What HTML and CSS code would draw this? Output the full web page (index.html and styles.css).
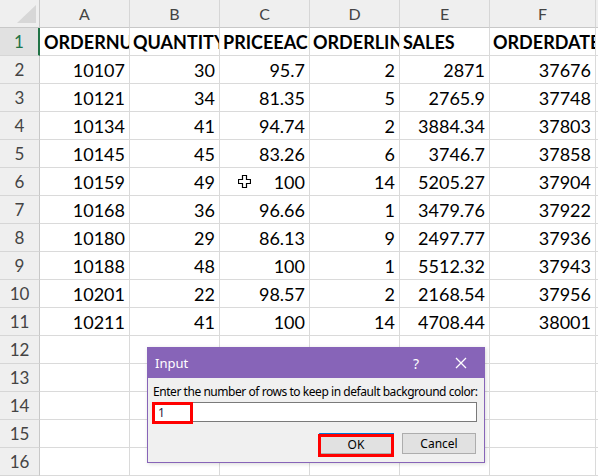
FILE: index.html
```html
<!DOCTYPE html>
<html lang="en">
<head>
    <meta charset="UTF-8">
    <title>Orders - Sheet1</title>
    <link rel="stylesheet" href="styles.css">
</head>
<body>
    <div class="workbook">
        <div class="sheet">
            <div class="corner"><span class="corner-mark"></span></div>
            <div class="col-head">A</div>
            <div class="col-head">B</div>
            <div class="col-head">C</div>
            <div class="col-head">D</div>
            <div class="col-head">E</div>
            <div class="col-head">F</div>
            <div class="col-head"></div>

            <div class="row-head active">1</div>
            <div class="cell text selected">ORDERNUMBER</div>
            <div class="cell text">QUANTITYORDERED</div>
            <div class="cell text">PRICEEACH</div>
            <div class="cell text">ORDERLINENUMBER</div>
            <div class="cell text">SALES</div>
            <div class="cell text">ORDERDATE</div>
            <div class="cell"></div>

            <div class="row-head">2</div>
            <div class="cell">10107</div><div class="cell">30</div><div class="cell">95.7</div><div class="cell">2</div><div class="cell">2871</div><div class="cell">37676</div><div class="cell"></div>
            <div class="row-head">3</div>
            <div class="cell">10121</div><div class="cell">34</div><div class="cell">81.35</div><div class="cell">5</div><div class="cell">2765.9</div><div class="cell">37748</div><div class="cell"></div>
            <div class="row-head">4</div>
            <div class="cell">10134</div><div class="cell">41</div><div class="cell">94.74</div><div class="cell">2</div><div class="cell">3884.34</div><div class="cell">37803</div><div class="cell"></div>
            <div class="row-head">5</div>
            <div class="cell">10145</div><div class="cell">45</div><div class="cell">83.26</div><div class="cell">6</div><div class="cell">3746.7</div><div class="cell">37858</div><div class="cell"></div>
            <div class="row-head">6</div>
            <div class="cell">10159</div><div class="cell">49</div>
            <div class="cell">
                <!-- mouse pointer resting over C6 -->
                <svg class="pointer" width="13" height="13" viewBox="0 0 13 13">
                    <path d="M4.5 0.5h4v4h4v4h-4v4h-4v-4h-4v-4h4z" fill="#fff" stroke="#000" stroke-width="1.2"/>
                </svg>100
            </div>
            <div class="cell">14</div><div class="cell">5205.27</div><div class="cell">37904</div><div class="cell"></div>
            <div class="row-head">7</div>
            <div class="cell">10168</div><div class="cell">36</div><div class="cell">96.66</div><div class="cell">1</div><div class="cell">3479.76</div><div class="cell">37922</div><div class="cell"></div>
            <div class="row-head">8</div>
            <div class="cell">10180</div><div class="cell">29</div><div class="cell">86.13</div><div class="cell">9</div><div class="cell">2497.77</div><div class="cell">37936</div><div class="cell"></div>
            <div class="row-head">9</div>
            <div class="cell">10188</div><div class="cell">48</div><div class="cell">100</div><div class="cell">1</div><div class="cell">5512.32</div><div class="cell">37943</div><div class="cell"></div>
            <div class="row-head">10</div>
            <div class="cell">10201</div><div class="cell">22</div><div class="cell">98.57</div><div class="cell">2</div><div class="cell">2168.54</div><div class="cell">37956</div><div class="cell"></div>
            <div class="row-head">11</div>
            <div class="cell">10211</div><div class="cell">41</div><div class="cell">100</div><div class="cell">14</div><div class="cell">4708.44</div><div class="cell">38001</div><div class="cell"></div>

            <div class="row-head">12</div>
            <div class="cell"></div><div class="cell"></div><div class="cell"></div><div class="cell"></div><div class="cell"></div><div class="cell"></div><div class="cell"></div>
            <div class="row-head">13</div>
            <div class="cell"></div><div class="cell"></div><div class="cell"></div><div class="cell"></div><div class="cell"></div><div class="cell"></div><div class="cell"></div>
            <div class="row-head">14</div>
            <div class="cell"></div><div class="cell"></div><div class="cell"></div><div class="cell"></div><div class="cell"></div><div class="cell"></div><div class="cell"></div>
            <div class="row-head">15</div>
            <div class="cell"></div><div class="cell"></div><div class="cell"></div><div class="cell"></div><div class="cell"></div><div class="cell"></div><div class="cell"></div>
            <div class="row-head">16</div>
            <div class="cell"></div><div class="cell"></div><div class="cell"></div><div class="cell"></div><div class="cell"></div><div class="cell"></div><div class="cell"></div>
        </div>

        <!-- InputBox dialog -->
        <div class="dialog">
            <div class="dialog-title">
                <span class="title-text">Input</span>
                <span class="title-help">?</span>
                <svg class="title-close" width="12" height="12" viewBox="0 0 12 12">
                    <path d="M1 1L11 11M11 1L1 11" stroke="#fff" stroke-width="1.3"/>
                </svg>
            </div>
            <div class="dialog-body">
                <label class="prompt" for="rowsInput">Enter the number of rows to keep in default background color:</label>
                <div class="input-wrap">
                    <input id="rowsInput" class="prompt-input" type="text" value="1">
                    <span class="mark mark-input"></span>
                </div>
                <div class="dialog-buttons">
                    <div class="btn-wrap">
                        <button class="btn btn-default">OK</button>
                        <span class="mark mark-ok"></span>
                    </div>
                    <button class="btn">Cancel</button>
                </div>
            </div>
        </div>
    </div>
</body>
</html>
```

FILE: styles.css
```css
body {
    margin: 0;
    background: #fff;
    overflow: hidden;
}

.workbook {
    position: relative;
    width: 598px;
    height: 476px;
    overflow: hidden;
}

.sheet {
    display: grid;
    grid-template-columns: 40px repeat(5, 90px) 106px 90px;
    grid-auto-rows: 28px;
    font-family: Lato, "Open Sans", sans-serif;
    font-size: 18px;
    color: #000;
}

.corner,
.col-head,
.row-head {
    background: #efefef;
    color: #444;
    box-sizing: border-box;
    display: flex;
    align-items: center;
    justify-content: center;
}

.corner {
    position: relative;
    border-right: 1px solid #c8c8c8;
    border-bottom: 1px solid #c8c8c8;
}

.corner-mark {
    position: absolute;
    right: 3px;
    bottom: 4px;
    width: 0;
    height: 0;
    border-left: 19px solid transparent;
    border-bottom: 18px solid #d7d7d7;
}

.col-head {
    font-size: 16px;
    border-right: 1px solid #d6d6d6;
    border-bottom: 1px solid #c8c8c8;
}

.row-head {
    font-size: 17px;
    border-right: 1px solid #c8c8c8;
    border-bottom: 1px solid #d6d6d6;
}

.row-head.active {
    background: #e1e1e1;
    color: #217346;
    border-right: 2px solid #217346;
}

.cell {
    box-sizing: border-box;
    border-right: 1px solid #dadada;
    border-bottom: 1px solid #dadada;
    display: flex;
    align-items: center;
    justify-content: flex-end;
    padding: 0 4px;
    white-space: nowrap;
    overflow: hidden;
}

.cell.text {
    justify-content: flex-start;
    padding: 0 3px;
    font-weight: 700;
}

.cell.selected {
    padding-left: 4px;
}

.pointer {
    margin-right: auto;
    margin-left: 14px;
}

/* dialog */

.dialog {
    position: absolute;
    left: 147px;
    top: 347px;
    width: 338px;
    height: 116px;
    box-sizing: border-box;
    border: 1px solid #8764b8;
    background: #f0f0f0;
    font-family: "Noto Sans", "Open Sans", sans-serif;
    font-size: 12px;
    color: #000;
    box-shadow: 1px 1px 4px rgba(0, 0, 0, 0.15);
}

.dialog-title {
    height: 30px;
    background: #8764b8;
    color: #fff;
    display: flex;
    align-items: center;
    padding: 0 0 0 7px;
}

.title-text {
    font-size: 13px;
    flex: 1;
}

.title-help {
    font-size: 14px;
    margin-right: 36px;
}

.title-close {
    margin-right: 17px;
}

.dialog-body {
    padding: 7px 7px 0 4px;
}

.prompt {
    display: block;
    line-height: 14px;
    margin-left: 1px;
    white-space: nowrap;
    letter-spacing: -0.45px;
}

.input-wrap {
    position: relative;
    margin-top: 3px;
}

.prompt-input {
    display: block;
    width: 325px;
    height: 20px;
    box-sizing: border-box;
    border: 1px solid #7a7a7a;
    background: #fff;
    font-family: inherit;
    font-size: 12px;
    color: #2a1a3e;
    padding: 0 0 0 5px;
    margin: 0;
    outline: none;
}

.mark {
    position: absolute;
    border: 3px solid #f00;
    box-sizing: border-box;
    pointer-events: none;
}

.mark-input {
    left: 0;
    top: 0;
    width: 41px;
    height: 22px;
}

.dialog-buttons {
    display: flex;
    justify-content: flex-end;
    gap: 8px;
    margin-top: 11px;
    padding-right: 1px;
}

.btn-wrap {
    position: relative;
}

.btn {
    width: 74px;
    height: 21px;
    box-sizing: border-box;
    border: 1px solid #adadad;
    background: #e1e1e1;
    font-family: inherit;
    font-size: 12px;
    color: #000;
    padding: 0;
    margin: 0;
}

.btn-default {
    border: 1px solid #adadad;
    border-top: 2px solid #0078d7;
    border-right: 2px solid #0078d7;
    width: 75px;
}

.mark-ok {
    left: -1px;
    top: 1px;
    width: 76px;
    height: 23px;
}
```
